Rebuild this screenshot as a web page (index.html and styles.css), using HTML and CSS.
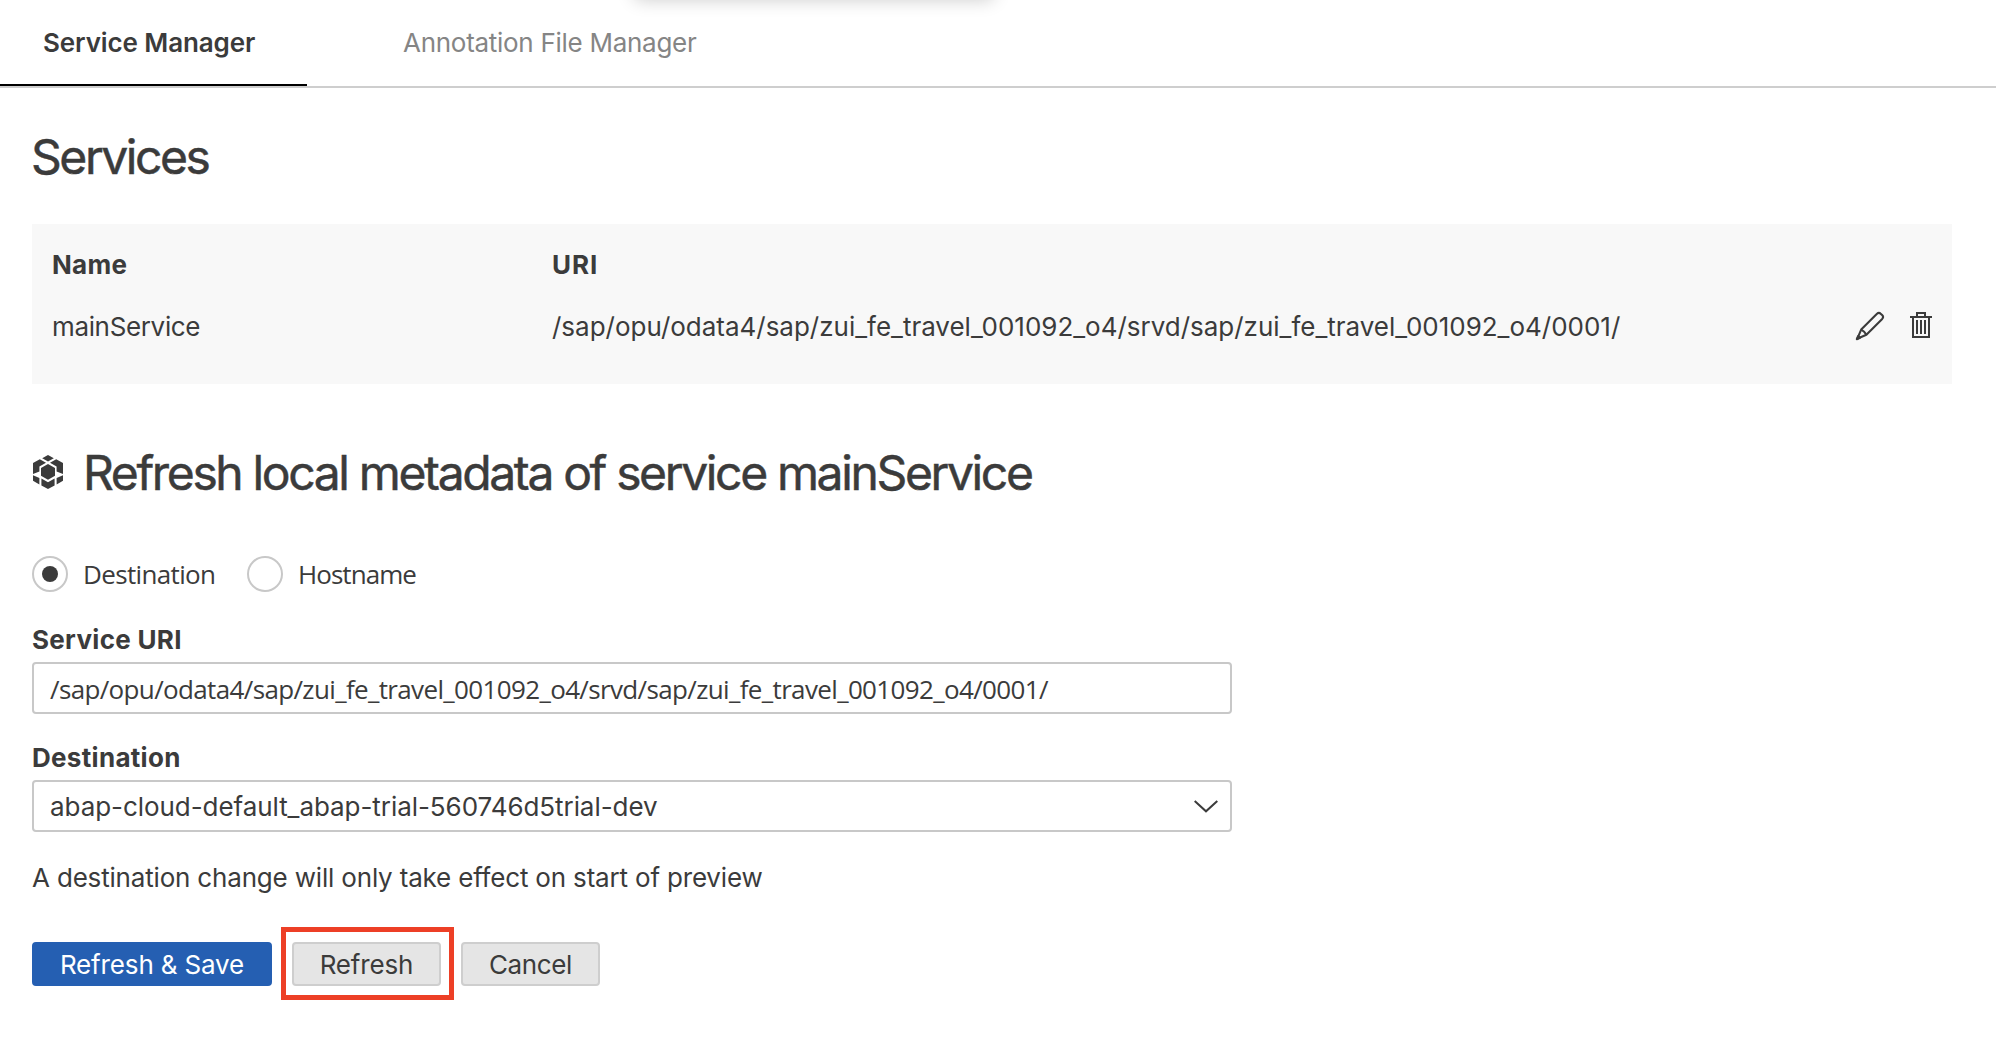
FILE: index.html
```html
<!DOCTYPE html>
<html lang="en">
<head>
<meta charset="utf-8">
<title>Service Manager</title>
<link rel="stylesheet" href="styles.css">
</head>
<body>
<div class="overlay-shadow"></div>
<nav class="tabs">
  <a class="tab tab-active">Service Manager</a>
  <a class="tab tab-idle">Annotation File Manager</a>
</nav>
<main class="page">
  <h1 class="title services-title">Services</h1>
  <section class="services">
    <div class="row head">
      <span class="name">Name</span>
      <span class="uri">URI</span>
    </div>
    <div class="row">
      <span class="name">mainService</span>
      <span class="uri">/sap/opu/odata4/sap/zui_fe_travel_001092_o4/srvd/sap/zui_fe_travel_001092_o4/0001/</span>
      <span class="actions">
        <svg class="icon" width="30" height="30" viewBox="0 0 30 30" fill="none" stroke="#3b3b3b" stroke-width="2.1" stroke-linejoin="round">
          <path d="M2.2 27.8 6.2 18.6 22 2.8Q23.9 1 25.9 2.9L27.1 4.1Q29 6 27.2 7.9L11.4 23.8Z"/>
          <path d="M6.2 18.6Q9.6 20.2 11.4 23.8"/>
          <path d="M1.8 28.2 3.2 25 5 26.8Z" fill="#3b3b3b"/>
        </svg>
        <svg class="icon" width="22" height="26" viewBox="0 0 22 26" fill="none" stroke="#3b3b3b" stroke-width="2">
          <path d="M0 5H22M7 5V1H15V5M3 5V25H19V5M7 8V22M11 8V22M15 8V22"/>
        </svg>
      </span>
    </div>
  </section>

  <h1 class="title refresh-title">
    <svg width="30" height="34" viewBox="0 0 30 34" fill="#3b3b3b">
      <path d="M15 0 20.8 3.3 15 6.5 9.2 3.3Z"/>
      <path d="M6.8 4.3 13 7.7 6.4 11.5V16.6L0 19V8.1Z"/>
      <path d="M23.2 4.3 17 7.7 23.6 11.5V16.6L30 19V8.1Z"/>
      <path d="M15 8.9 22 12.9V20.8L15 24.8 8 20.8V12.9Z"/>
      <path d="M0 20.2 6.4 23V29.4L0 25.8Z"/>
      <path d="M30 20.2 23.6 23V29.4L30 25.8Z"/>
      <path d="M8.4 23.6 15 27.2 21.6 23.6V30.4L15 34 8.4 30.4Z"/>
    </svg>
    <span>Refresh local metadata of service mainService</span>
  </h1>

  <div class="radios">
    <label class="radio"><span class="circle checked"></span><span class="opt-destination">Destination</span></label>
    <label class="radio"><span class="circle"></span><span class="opt-hostname">Hostname</span></label>
  </div>

  <label class="label">Service URI</label>
  <div class="field field-uri">/sap/opu/odata4/sap/zui_fe_travel_001092_o4/srvd/sap/zui_fe_travel_001092_o4/0001/</div>

  <label class="label label-destination">Destination</label>
  <div class="field field-select">
    <span>abap-cloud-default_abap-trial-560746d5trial-dev</span>
    <svg width="24" height="13" viewBox="0 0 24 13" fill="none" stroke="#3b3b3b" stroke-width="2"><path d="M.7 1 12 11.3 23.3 1"/></svg>
  </div>

  <p class="note">A destination change will only take effect on start of preview</p>

  <div class="buttons">
    <button class="btn primary">Refresh &amp; Save</button>
    <span class="highlight"><button class="btn refresh">Refresh</button></span>
    <button class="btn cancel">Cancel</button>
  </div>
</main>
</body>
</html>
```
FILE: styles.css
```css
* { box-sizing: border-box; }

body {
  margin: 0;
  background: #fff;
  color: #3b3b3b;
  font: 26px/32px Inter, "Liberation Sans", sans-serif;
  overflow: hidden;
}

/* bottom edge of a popup that hangs above the page */
.overlay-shadow {
  position: absolute;
  left: 634px;
  top: -40px;
  width: 360px;
  height: 36px;
  border-radius: 6px;
  box-shadow: 0 4px 18px rgba(0, 0, 0, 0.2);
}

.tabs {
  display: flex;
  height: 88px;
  border-bottom: 2px solid #cecece;
}

.tab { padding-top: 27px; height: 86px; white-space: nowrap; }
.tab-active {
  width: 307px;
  padding-left: 43px;
  border-bottom: 2px solid #000;
  font-weight: 600;
  letter-spacing: -0.11px;
}
.tab-idle { padding-left: 96px; color: #858585; letter-spacing: -0.28px; }

.page { padding: 39px 44px 0 32px; }

.title {
  margin: 0;
  font-size: 48px;
  line-height: 60px;
  font-weight: 400;
  letter-spacing: -2.36px;
  white-space: nowrap;
  -webkit-text-stroke: 0.5px #3b3b3b;
}
.services-title { margin-left: -1px; letter-spacing: -2.45px; }

.services {
  height: 160px;
  margin-top: 37px;
  padding: 25px 20px 0 20px;
  background: #f8f8f8;
}
.row { display: flex; height: 32px; white-space: nowrap; }
.row + .row { margin-top: 30px; }
.name { width: 500px; letter-spacing: -0.35px; }
.uri { flex: 1; letter-spacing: -0.013px; }
.head { font-weight: 700; }
.head .name { letter-spacing: 0.3px; }
.head .uri { letter-spacing: 0.9px; }
.actions { display: flex; align-items: center; gap: 25px; margin-top: -4px; }
.actions .icon:first-child { margin-top: 1px; }

.refresh-title {
  display: flex;
  gap: 20px;
  margin: 59px 0 53px;
}
.refresh-title svg { margin: 12px 0 0 1px; }

.radios { display: flex; gap: 33px; font-family: "Open Sans", "Noto Sans", sans-serif; }
.radio { display: flex; gap: 15px; height: 36px; line-height: 36px; }
.circle {
  display: grid;
  place-items: center;
  width: 36px;
  height: 36px;
  border: 2px solid #c8c8c8;
  border-radius: 50%;
}
.checked::before {
  content: "";
  width: 16px;
  height: 16px;
  border-radius: 50%;
  background: #3b3b3b;
}
.opt-destination { width: 131px; letter-spacing: -0.65px; }
.opt-hostname { letter-spacing: -0.95px; }

.label {
  display: block;
  margin-top: 32px;
  font-weight: 700;
  letter-spacing: 0.3px;
}
.label-destination { margin-top: 28px; }

.field {
  display: flex;
  align-items: center;
  width: 1200px;
  height: 52px;
  margin-top: 6px;
  padding: 1px 12px 0 16px;
  border: 2px solid #c8c8c8;
  border-radius: 4px;
  white-space: nowrap;
}
.field-uri { padding-top: 2px; font-family: "Open Sans", "Noto Sans", sans-serif; letter-spacing: -0.643px; }
.field-select { justify-content: space-between; letter-spacing: -0.06px; }

.note { margin: 30px 0 0; letter-spacing: -0.18px; }

.buttons { display: flex; align-items: center; margin-top: 33px; }
.btn {
  height: 44px;
  padding: 2px 0 0;
  border: 2px solid #cecece;
  border-radius: 4px;
  background: #e5e5e5;
  color: #3b3b3b;
  font: inherit;
  line-height: 32px;
}
.primary { width: 240px; border-color: #255fb2; background: #255fb2; color: #fff; letter-spacing: -0.15px; }
.highlight {
  margin: 0 7px 1px 9px;
  padding: 10px 8px 9px 6px;
  border: 5px solid #ed3f26;
  line-height: 0;
}
.refresh { width: 149px; letter-spacing: -0.15px; vertical-align: top; }
.cancel { width: 139px; letter-spacing: -0.35px; }
```
